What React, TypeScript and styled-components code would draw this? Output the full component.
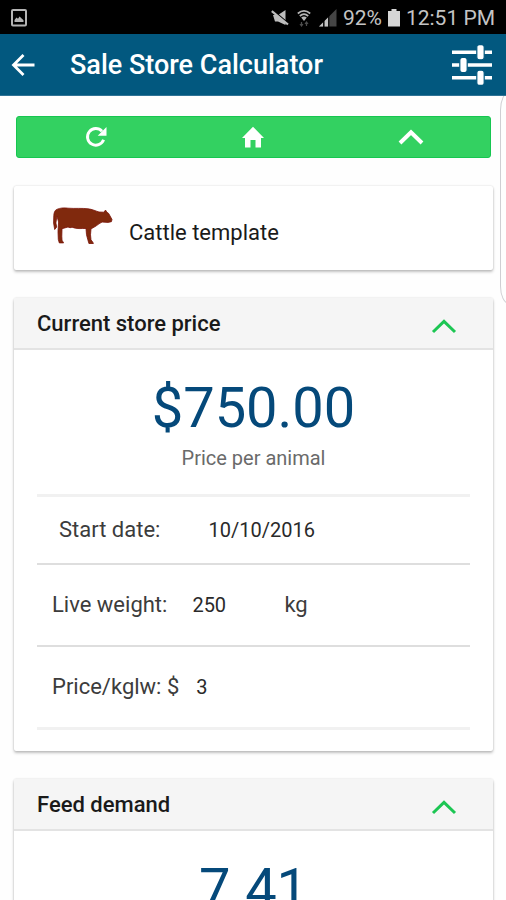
import React, { useId, useState } from "react";
import styled, { createGlobalStyle, css } from "styled-components";

const color = {
  bar: "#02587f",
  figure: "#05497a",
  green: "#33d161",
  greenEdge: "#16c650",
  accent: "#1cc653",
  panel: "#f5f5f5",
  line: "#dedede",
  softLine: "#f1f1f1",
};

const GlobalStyle = createGlobalStyle`
  *, *::before, *::after { box-sizing: border-box; }
  body {
    margin: 0;
    background: #fefefe;
    font-family: Roboto, "Liberation Sans", sans-serif;
    color: #1a1a1a;
  }
  h1, h2, p { margin: 0; }
  button, input { font: inherit; color: inherit; }
`;

const Screen = styled.div`
  position: relative;
  display: flex;
  flex-direction: column;
  height: 100vh;
  overflow: hidden;
`;

const StatusBar = styled.div`
  flex: none;
  display: flex;
  align-items: center;
  justify-content: space-between;
  height: 34px;
  padding: 2px 11px 0;
  background: #000;
  color: #c4c4c4;
  font-size: 21px;
  line-height: 32px;
`;

const StatusGroup = styled.div`
  display: flex;
  align-items: center;
  gap: 6px;
  white-space: nowrap;
`;

const Signals = styled.span`
  display: flex;
  align-items: center;
  gap: 8px;
`;

const AppBar = styled.header`
  flex: none;
  display: flex;
  align-items: center;
  height: 62px;
  padding: 0 12px 0 10px;
  background: ${color.bar};
  border-bottom: 1px solid #2f7396;
  color: #fff;
`;

const Title = styled.h1`
  flex: 1;
  padding-left: 34px;
  font-size: 27px;
  font-weight: 500;
  line-height: 32px;
  white-space: nowrap;
`;

const IconButton = styled.button`
  display: flex;
  align-items: center;
  justify-content: center;
  padding: 0;
  border: 0;
  background: none;
  cursor: pointer;
`;

const Content = styled.main`
  flex: 1;
  min-height: 0;
  overflow-y: auto;
  scrollbar-width: none;
  display: flex;
  flex-direction: column;
  gap: 28px;
  padding: 20px 13px 20px 14px;
`;

const ActionBar = styled.nav`
  flex: none;
  display: grid;
  grid-template-columns: repeat(3, 1fr);
  height: 42px;
  margin: 0 2px;
  background: ${color.green};
  border: 1px solid ${color.greenEdge};
  border-radius: 3px;
  color: #fff;
`;

const cardFrame = css`
  flex: none;
  background: #fff;
  border-radius: 2px;
  box-shadow: 0 2px 3px rgba(0, 0, 0, 0.24), 0 0 2px rgba(0, 0, 0, 0.16);
`;

const TemplateCard = styled.button`
  ${cardFrame}
  display: flex;
  align-items: flex-start;
  gap: 16px;
  height: 84px;
  padding: 21px 39px 0;
  border: 0;
  text-align: left;
  font-size: 22px;
  line-height: 28px;
  cursor: pointer;
`;

const TemplateName = styled.span`
  padding-top: 12px;
`;

const Card = styled.section`
  ${cardFrame}
`;

const CardHeader = styled.div`
  display: flex;
  align-items: center;
  justify-content: space-between;
  height: 52px;
  padding: 2px 36px 0 23px;
  background: ${color.panel};
  border-bottom: 2px solid #e3e3e3;
  color: ${color.accent};
`;

const CardTitle = styled.h2`
  color: #1a1a1a;
  font-size: 22px;
  font-weight: 500;
  line-height: 28px;
`;

const CardToggle = styled(IconButton)`
  padding-top: 4px;
`;

const CardBody = styled.div`
  padding: 24px 23px 21px;
`;

const Figure = styled.p`
  color: ${color.figure};
  font-size: 56px;
  line-height: 68px;
  text-align: center;
`;

const Caption = styled.p`
  padding-top: 2px;
  color: #6a6a6a;
  font-size: 20px;
  line-height: 28px;
  text-align: center;
`;

const Fields = styled.div`
  margin-top: 22px;
  border-top: 3px solid ${color.softLine};
  border-bottom: 3px solid ${color.softLine};
`;

const Row = styled.div<{ $compact?: boolean }>`
  display: flex;
  align-items: center;
  height: ${(p) => (p.$compact ? 66 : 82)}px;
  padding-left: ${(p) => (p.$compact ? 22 : 15)}px;
  color: #3c3c3c;
  font-size: 22px;
  line-height: 28px;

  & + & {
    border-top: 2px solid ${color.line};
  }
`;

const Field = styled.input<{ $width: number; $gap: number }>`
  width: ${(p) => p.$width}px;
  margin-left: ${(p) => p.$gap}px;
  padding: 0;
  border: 0;
  outline: 0;
  background: transparent;
  color: #2a2a2a;
  font-size: 20px;
  line-height: 28px;
`;

const EdgeHandle = styled.div`
  position: absolute;
  top: 92px;
  right: -12px;
  width: 18px;
  height: 212px;
  border: 1px solid #cfcfd3;
  border-radius: 18px / 36px;
  clip-path: inset(4px 0 0 0);
  pointer-events: none;
`;

const Chevron = ({ weight = 3 }: { weight?: number }) => (
  <svg width="26" height="16" viewBox="0 0 26 16" fill="none" stroke="currentColor" strokeWidth={weight} aria-hidden>
    <path d="M2 14 13 3.400 24 14" />
  </svg>
);

const ScreenshotIcon = () => (
  <svg width="16" height="18" viewBox="0 0 16 18" aria-hidden>
    <rect x="1" y="1" width="14" height="15.400" rx="1" fill="none" stroke="#b4b4b4" strokeWidth="2" />
    <path d="M3.500 13V11l2-2.500 1.500 1.200L8.600 7.500l3.900 3.800V13z" fill="#b4b4b4" />
  </svg>
);

const MuteIcon = () => (
  <svg width="18" height="18" viewBox="0 0 18 18" aria-hidden>
    <path d="M2 6h5L14.500 1v15L7 12.500H4z" fill="#bdbdbd" />
    <path d="M1 .5 17 14" stroke="#000" strokeWidth="1.500" />
    <path d="M.8 2.200 17 15.500" stroke="#bdbdbd" strokeWidth="2.200" />
  </svg>
);

const WifiIcon = () => (
  <svg width="14" height="18" viewBox="0 0 14 18" fill="none" aria-hidden>
    <path d="M.8 4.500Q7-.8 13.200 4.500M2.800 7Q7 3.400 11.200 7" stroke="#b5b5b5" strokeWidth="1.700" />
    <path d="M4.200 8.500Q7 6.300 9.800 8.500L7 12z" fill="#b5b5b5" />
    <path d="M4.500 13v4M9.500 13v4M3 15l1.500 2L6 15M8 15l1.500-2L11 15" stroke="#4d4d4d" strokeWidth="1.200" />
  </svg>
);

const SignalIcon = () => (
  <svg width="18" height="18" viewBox="0 0 18 18" aria-hidden>
    <path d="M0 17.500 17.500 0v17.500z" fill="#454545" />
    <path d="M0 17.500l4-4v4zM5.500 17.500V12L9 8.500v9z" fill="#c4c4c4" />
    <path d="M4.800 10v8M9.800 6v12" stroke="#000" strokeWidth="1" />
  </svg>
);

const BatteryIcon = () => (
  <svg width="12" height="18" viewBox="0 0 12 18" aria-hidden>
    <path d="M3.500 0h5v2H12v15.500H0V2h3.500z" fill="#d6d6d6" />
  </svg>
);

const BackIcon = () => (
  <svg width="26" height="24" viewBox="0 0 26 24" fill="none" stroke="currentColor" strokeWidth="2.800" aria-hidden>
    <path d="M24.500 12H4M13.500 2 3.500 12l10 10" />
  </svg>
);

const SlidersIcon = () => (
  <svg width="42" height="40" viewBox="0 0 42 40" fill="currentColor" aria-hidden>
    <path d="M0 5.500h40v3.400H0zM0 18.300h40v3.400H0zM0 31.100h40v3.400H0z" />
    <g stroke={color.bar} strokeWidth="1.200">
      <rect x="24.800" y="-.4" width="7.400" height="15.200" rx="2.500" />
      <rect x="7.800" y="12.400" width="7.400" height="15.200" rx="2.500" />
      <rect x="24.800" y="25.200" width="7.400" height="15.200" rx="2.500" />
    </g>
  </svg>
);

const RefreshIcon = () => (
  <svg width="22" height="22" viewBox="0 0 22 22" aria-hidden>
    <path d="M18.600 13.800A8.300 8.300 0 1 1 17 5.300" fill="none" stroke="currentColor" strokeWidth="2.900" />
    <path d="M21.500 1v8.800h-8.800z" fill="currentColor" />
  </svg>
);

const HomeIcon = () => (
  <svg width="22" height="22" viewBox="0 0 22 22" fill="currentColor" aria-hidden>
    <path d="M11 .8 22 12h-3v9.500h-5.500V14h-5v7.500H3V12H0z" />
  </svg>
);

const CowIcon = () => (
  <svg width="60" height="37" viewBox="0 0 60 37" aria-hidden>
    <path
      d="M3.500 2.500C7 .8 11.500.6 15 1.200c7 .5 14-.2 20 .6 4 .4 8 2.300 11 3.200L51 5.200l1.500-2.200 1.200 2 2 1.500 3.300 6-.6 2.200-3.400.7-5.500-.3c-3.500 1-5.500 4-11.500 6.700l-.5 6 .5 5 2 2.700.3 1.200h-4.300l-1.200-4-1.300-5-.5-6.200c-5-.2-9 .8-14-1.300-1 .8-3 .4-4-.2l-6 1.700-.2 7.500.2 4 1.600 2.700H6.300l-1-3.400-.3-8L5.600 15 3.900 9l-1 7 .8 4-2 2.500L.6 16 .8 8.500C1 5.500 1.800 3.500 3.500 2.500z"
      fill="#80290d"
      stroke="#7a1208"
      strokeWidth=".8"
      strokeLinejoin="round"
    />
  </svg>
);

type FieldRowProps = {
  label: string;
  initial: string;
  width: number;
  gap: number;
  unit?: string;
  compact?: boolean;
};

function FieldRow({ label, initial, width, gap, unit, compact }: FieldRowProps) {
  const id = useId();
  const [value, setValue] = useState(initial);
  return (
    <Row $compact={compact}>
      <label htmlFor={id}>{label}</label>
      <Field id={id} $width={width} $gap={gap} value={value} onChange={(e) => setValue(e.target.value)} />
      {unit && <span>{unit}</span>}
    </Row>
  );
}

function Section({ title, children }: { title: string; children: React.ReactNode }) {
  const [open, setOpen] = useState(true);
  return (
    <Card>
      <CardHeader>
        <CardTitle>{title}</CardTitle>
        <CardToggle aria-label={`Toggle ${title}`} aria-expanded={open} onClick={() => setOpen(!open)}>
          <Chevron />
        </CardToggle>
      </CardHeader>
      {open && <CardBody>{children}</CardBody>}
    </Card>
  );
}

export default function App() {
  return (
    <Screen>
      <GlobalStyle />
      <StatusBar>
        <ScreenshotIcon />
        <StatusGroup>
          <Signals>
            <MuteIcon />
            <WifiIcon />
            <SignalIcon />
          </Signals>
          <span>92%</span>
          <BatteryIcon />
          <span>12:51 PM</span>
        </StatusGroup>
      </StatusBar>
      <AppBar>
        <IconButton aria-label="Back">
          <BackIcon />
        </IconButton>
        <Title>Sale Store Calculator</Title>
        <IconButton aria-label="Settings">
          <SlidersIcon />
        </IconButton>
      </AppBar>
      <Content>
        <ActionBar>
          <IconButton aria-label="Reset">
            <RefreshIcon />
          </IconButton>
          <IconButton aria-label="Home">
            <HomeIcon />
          </IconButton>
          <IconButton aria-label="Collapse all">
            <Chevron weight={4} />
          </IconButton>
        </ActionBar>
        <TemplateCard>
          <CowIcon />
          <TemplateName>Cattle template</TemplateName>
        </TemplateCard>
        <Section title="Current store price">
          <Figure>$750.00</Figure>
          <Caption>Price per animal</Caption>
          <Fields>
            <FieldRow label="Start date:" initial="10/10/2016" width={120} gap={48} compact />
            <FieldRow label="Live weight:" initial="250" width={92} gap={25} unit="kg" />
            <FieldRow label="Price/kglw: $" initial="3" width={92} gap={17} />
          </Fields>
        </Section>
        <Section title="Feed demand">
          <Figure>7.41</Figure>
        </Section>
      </Content>
      <EdgeHandle />
    </Screen>
  );
}
